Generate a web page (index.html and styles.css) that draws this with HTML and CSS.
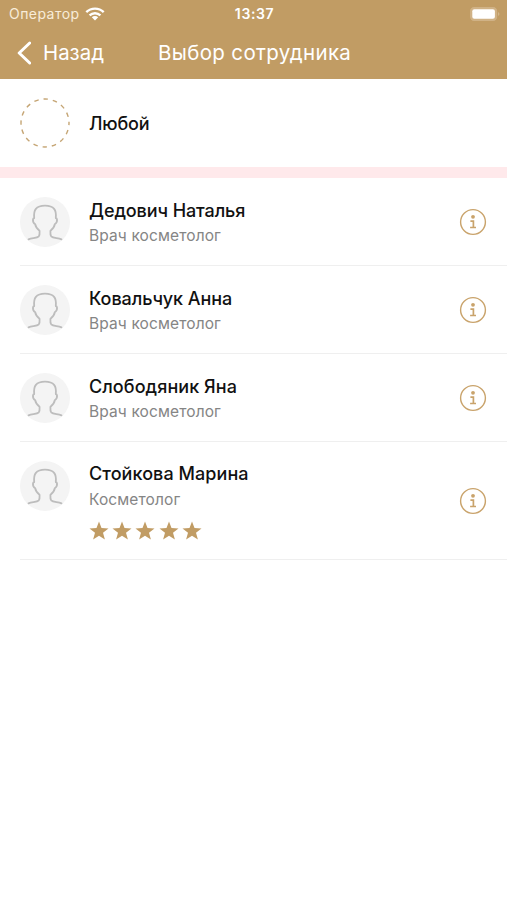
FILE: index.html
```html
<!DOCTYPE html>
<html lang="ru">
<head>
<meta charset="utf-8">
<title>Выбор сотрудника</title>
<link rel="stylesheet" href="styles.css">
</head>
<body>
<svg class="defs" aria-hidden="true">
  <symbol id="person" viewBox="0 0 50 50">
    <circle cx="25" cy="25" r="25" fill="#f4f4f4"/>
    <path d="M8.5 42.3C12.5 40.8 17 41.3 18.8 39.3C20 37.7 19.6 35.5 19.5 33.7C17 31.8 15.5 29.5 15.2 27.2C13.7 26.2 12.8 23.7 13 22.3C13.1 21.5 13.6 21.3 14.2 21.2C13.3 13 16 8.6 25 8.6S36.7 13 35.8 21.2C36.4 21.3 36.9 21.5 37 22.3C37.2 23.7 36.3 26.2 34.8 27.2C34.5 29.5 33 31.8 30.5 33.7C30.4 35.5 30 37.7 31.2 39.3C33 41.3 37.5 40.8 41.5 42.3" fill="none" stroke="#bdbdbd" stroke-width="1.8" stroke-linecap="round" stroke-linejoin="round"/>
  </symbol>
  <symbol id="info" viewBox="0 0 28 28">
    <circle cx="14" cy="14" r="12.4" fill="none" stroke="#c9a36b" stroke-width="1.4"/>
    <circle cx="14" cy="8.8" r="1.9" fill="#c9a36b"/>
    <path d="M11.4 13.2H14.4V19.5M11.1 19.5H17" fill="none" stroke="#c9a36b" stroke-width="1.7"/>
  </symbol>
  <symbol id="star" viewBox="0 0 20 20">
    <path d="M10 0.5L12.5 7.1L19.5 7.4L14 11.8L15.9 18.6L10 14.7L4.1 18.6L6 11.8L0.5 7.4L7.5 7.1Z" fill="#c19c64"/>
  </symbol>
</svg>
<header class="header">
  <div class="status">
    <div class="carrier"><span>Оператор</span>
      <svg width="20" height="14" viewBox="0 0 20 14"><g fill="none" stroke="#fff" stroke-width="2.4"><path d="M1.3 5.1A12.5 12.5 0 0 1 18.7 5.1"/><path d="M4.6 8.4A7.8 7.8 0 0 1 15.4 8.4"/></g><path d="M10 13.4L6.8 10.2A4.6 4.6 0 0 1 13.2 10.2Z" fill="#fff"/></svg>
    </div>
    <span class="time">13:37</span>
    <svg class="battery" width="31" height="14" viewBox="0 0 31 14"><rect x=".6" y=".6" width="26" height="12.8" rx="3.6" fill="#d0b286" stroke="#d0b286" stroke-width="1.1"/><rect x="2.3" y="2.3" width="22.6" height="9.4" rx="2" fill="#fff"/><path d="M28.3 5Q30.4 7 28.3 9Z" fill="#d9c19d"/></svg>
  </div>
  <nav class="nav">
    <a class="back"><svg width="16" height="24" viewBox="0 0 16 24"><path d="M14.7 2L4.2 12L14.7 22" fill="none" stroke="#fff" stroke-width="3" stroke-linecap="round" stroke-linejoin="round"/></svg><span>Назад</span></a>
    <h1 class="title">Выбор сотрудника</h1>
  </nav>
</header>
<main>
  <section class="row any">
    <svg class="avatar" viewBox="0 0 50 50"><circle cx="25" cy="25" r="24" fill="none" stroke="#c5a574" stroke-width="1.4" stroke-dasharray="4.5 4.925" stroke-dashoffset="2.25"/></svg>
    <div class="name">Любой</div>
  </section>
  <div class="band"></div>
  <section class="row">
    <svg class="avatar"><use href="#person"/></svg>
    <div class="text"><div class="name n1">Дедович Наталья</div><div class="role">Врач косметолог</div></div>
    <svg class="info"><use href="#info"/></svg>
  </section>
  <section class="row">
    <svg class="avatar"><use href="#person"/></svg>
    <div class="text"><div class="name n2">Ковальчук Анна</div><div class="role">Врач косметолог</div></div>
    <svg class="info"><use href="#info"/></svg>
  </section>
  <section class="row">
    <svg class="avatar"><use href="#person"/></svg>
    <div class="text"><div class="name n3">Слободяник Яна</div><div class="role">Врач косметолог</div></div>
    <svg class="info"><use href="#info"/></svg>
  </section>
  <section class="row rated">
    <svg class="avatar"><use href="#person"/></svg>
    <div class="text"><div class="name n4">Стойкова Марина</div><div class="role">Косметолог</div>
      <div class="stars"><svg><use href="#star"/></svg><svg><use href="#star"/></svg><svg><use href="#star"/></svg><svg><use href="#star"/></svg><svg><use href="#star"/></svg></div>
    </div>
    <svg class="info"><use href="#info"/></svg>
  </section>
</main>
</body>
</html>
```
FILE: styles.css
```css
* { box-sizing: border-box; }
body { margin: 0; background: #fff; color: #111; font-family: Inter, "Liberation Sans", sans-serif; }
svg { display: block; flex: none; }
.defs { display: none; }
.header { height: 79px; background: #c19c64; color: #fff; }
.status { height: 27px; padding: 0 6px 0 9px; display: grid; grid-template-columns: 1fr auto 1fr; align-items: center; font-size: 14px; line-height: 27px; }
.carrier { display: flex; align-items: center; gap: 5px; color: #f8ecd9; letter-spacing: .45px; }
.time { font-weight: 600; letter-spacing: .6px; margin-right: 1px; }
.battery { justify-self: end; }
.nav { height: 52px; display: flex; align-items: center; padding: 0 0 1px 15px; }
.back { width: 143px; display: flex; align-items: center; gap: 12px; font-size: 20.4px; }
.title { margin: 0; font-size: 20.5px; font-weight: 400; letter-spacing: .35px; }
.row { height: 88px; margin-left: 20px; padding-right: 20px; display: flex; align-items: flex-start; border-bottom: 1px solid #efefef; }
.avatar { width: 50px; height: 50px; margin: 19px 19px 0 0; }
.text { flex: 1; padding-top: 21px; }
.name { font-size: 18px; line-height: 24px; font-weight: 500; }
.n1 { letter-spacing: -.1px; }
.n2 { letter-spacing: -.05px; }
.n3, .n4 { letter-spacing: .07px; }
.any { border-bottom-color: #fff; }
.any .name { padding-top: 33px; letter-spacing: -.2px; }
.role { margin-top: 2px; font-size: 15.5px; line-height: 22px; letter-spacing: .12px; color: #858585; }
.info { width: 28px; height: 28px; align-self: center; }
.band { height: 11px; background: #ffe9eb; }
.rated { height: 118px; }
.stars { display: flex; gap: 3.2px; margin-top: 10px; }
.rated .text { padding-top: 20px; }
.rated .role { margin-top: 3px; }
.stars svg { width: 20px; height: 20px; }
```
